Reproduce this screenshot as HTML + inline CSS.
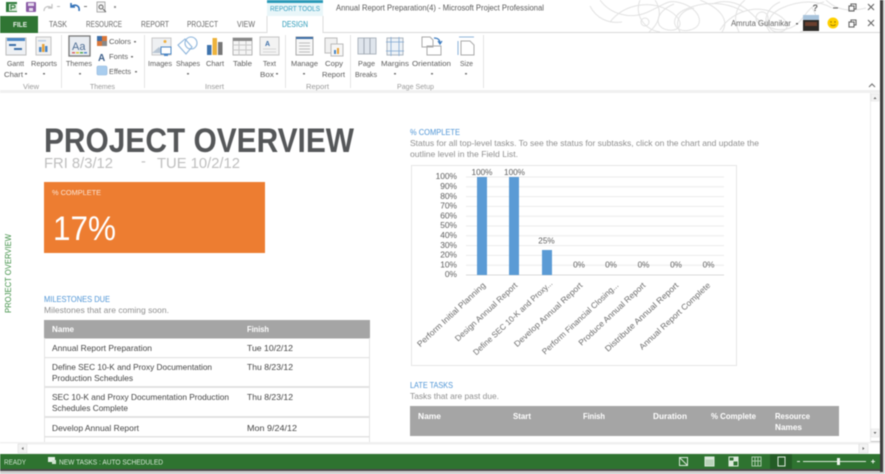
<!DOCTYPE html>
<html lang="en"><head><meta charset="utf-8"><title>Annual Report Preparation - Microsoft Project Professional</title>
<style>
html,body{margin:0;padding:0;background:#fff;width:885px;height:474px;overflow:hidden}
svg{display:block;filter:blur(.6px)}
text{font-family:"Liberation Sans",sans-serif}
.r text{font-size:7.6px;fill:#5c5c5c}
.b{font-size:8.3px;fill:#4f95d6}
.g{font-size:8.3px;fill:#8f8f8f}
.t{font-size:8.3px;fill:#444}
.h{font-size:8.3px;fill:#fff;font-weight:bold}
.y{font-size:8.4px;fill:#5c5c5c;text-anchor:end}
.d{font-size:8.2px;fill:#5c5c5c;text-anchor:middle}
.c{font-size:8.2px;fill:#6c6c6c;text-anchor:end}
</style></head><body>
<svg width="885" height="474" viewBox="0 0 885 474" xmlns="http://www.w3.org/2000/svg">
<rect width="885" height="474" fill="#fff"/>

<!-- swirl decoration -->
<g fill="none" stroke="#e2e2e2" stroke-width="1">
<path d="M600 0c10 14 30 20 48 12s20-14 36-8 22 22 6 26-22-12-6-20 40-10 60 2"/>
<path d="M610 22c14-18 40-22 58-12s14 22 0 20-14-18 6-26"/>
<path d="M640 0c-6 14 4 30 20 32M700 0c20 8 30 20 22 32M720 30c10-16 32-26 52-18s18 20 6 20-14-16 4-24 36-8 50 0"/>
<path d="M712 4c16-6 30 0 40 10s22 20 38 14 14-22 34-26M770 32c-8-10-4-24 10-30M800 32c14-4 20-14 12-24M826 0c10 10 24 12 40 8"/>
<path d="M590 6c6 12 18 18 32 16M655 0c8 12 4 24-6 32M680 32c-6-10 0-22 14-24M745 0c-10 8-12 20-6 32"/>
<circle cx="645" cy="22" r="4"/><circle cx="762" cy="18" r="6"/>
</g>

<!-- quick access -->
<rect x="6" y="2" width="11" height="10" fill="#2f7b3b"/><rect x="9" y="4" width="8" height="7" fill="#d8ead8"/><path d="M11 10V5h2.500a1.500 1.500 0 010 3H11" fill="none" stroke="#2f7b3b" stroke-width="1.100"/>
<rect x="26" y="2" width="10" height="10" rx="1" fill="#8a5aa5"/><rect x="28" y="3" width="6" height="3" fill="#e6dbee"/><rect x="29" y="8" width="4" height="3" fill="#e6dbee"/>
<path d="M44 11c0-4 4-6 8-3M52 4v4h-4" fill="none" stroke="#c2c2c2" stroke-width="1.200"/>
<path d="M79 11c1-5-3-7-7-5M71 3v4h4" fill="none" stroke="#2f6fb7" stroke-width="1.600"/>
<rect x="97" y="2" width="8" height="10" fill="#f4f4f4" stroke="#999" stroke-width=".8"/><circle cx="101" cy="7" r="2" fill="none" stroke="#666"/><path d="M103 9l3 3" stroke="#666"/>
<rect x="114" y="6" width="2" height="2" fill="#999"/><rect x="57" y="6" width="3" height="1" fill="#bbb"/><rect x="84" y="6" width="3" height="1" fill="#777"/>

<!-- title bar -->
<rect x="267" y="0" width="56" height="3" fill="#2b9ab8"/>
<rect x="267" y="3" width="56" height="13" fill="#e9f6f9"/>
<text x="270" y="11" font-size="7.4" fill="#3a9fc0" textLength="50" lengthAdjust="spacingAndGlyphs">REPORT TOOLS</text>
<text x="336" y="10.500" font-size="8" fill="#595959" textLength="208" lengthAdjust="spacingAndGlyphs">Annual Report Preparation(4) - Microsoft Project Professional</text>

<!-- window controls -->
<g fill="none" stroke="#666" stroke-width="1.1">
<path d="M833 8h5"/><rect x="849" y="6" width="5" height="5"/><path d="M851 6V4h5v5h-2"/><path d="M868 4l6 6M874 4l-6 6"/>
<rect x="849" y="22" width="5" height="5"/><path d="M851 22v-2h5v5h-2"/><path d="M868 20l6 6M874 20l-6 6"/>
</g>
<text x="812.500" y="11" font-size="9" font-weight="bold" fill="#666">?</text>
<text x="731" y="26" font-size="8" fill="#666" textLength="60" lengthAdjust="spacingAndGlyphs">Amruta Gulanikar</text>
<rect x="796" y="23" width="2" height="1.500" fill="#666"/>
<rect x="803" y="15" width="16" height="6" fill="#a9c4dc"/><rect x="803" y="20" width="16" height="11" fill="#2d2a27"/><rect x="805" y="22" width="12" height="4" fill="#6b3f2e"/>
<circle cx="833" cy="23" r="5.500" fill="#ffd000"/><circle cx="831" cy="22" r=".7" fill="#8a6a00"/><circle cx="835" cy="22" r=".7" fill="#8a6a00"/><path d="M830.500 24.500c1 1.500 4 1.500 5 0" fill="none" stroke="#8a6a00" stroke-width=".7"/>

<!-- tabs -->
<rect x="0" y="32" width="880" height="1" fill="#d9d9d9"/>
<rect x="0" y="16" width="38" height="17" fill="#2f7533"/>
<text x="13" y="27" font-size="7.6" font-weight="bold" fill="#e6f0e6" textLength="14" lengthAdjust="spacingAndGlyphs">FILE</text>
<g font-size="7.8" fill="#666">
<text x="49" y="27" textLength="18" lengthAdjust="spacingAndGlyphs">TASK</text>
<text x="86" y="27" textLength="36" lengthAdjust="spacingAndGlyphs">RESOURCE</text>
<text x="141" y="27" textLength="28" lengthAdjust="spacingAndGlyphs">REPORT</text>
<text x="187" y="27" textLength="31" lengthAdjust="spacingAndGlyphs">PROJECT</text>
<text x="237" y="27" textLength="18" lengthAdjust="spacingAndGlyphs">VIEW</text>
</g>
<rect x="267" y="16" width="56" height="18" fill="#fff"/>
<path d="M267 33V16M323 16V33" stroke="#dcdcdc"/>
<text x="282" y="27" font-size="7.8" fill="#2b9ab8" textLength="26" lengthAdjust="spacingAndGlyphs">DESIGN</text>

<!-- ribbon -->
<rect x="0" y="90" width="880" height="3" fill="#f0f0f0"/>
<g fill="#e4e4e4"><rect x="61" y="35" width="1" height="53"/><rect x="144" y="35" width="1" height="53"/><rect x="285" y="35" width="1" height="53"/><rect x="350" y="35" width="1" height="53"/><rect x="483" y="35" width="1" height="53"/></g>

<!-- ribbon icons -->
<rect x="6" y="38" width="20" height="17" fill="#eef1f4" stroke="#bbb"/><rect x="7" y="38" width="18" height="3" fill="#4a86c5"/><rect x="9" y="44" width="7" height="2" fill="#3d6fa8"/><rect x="14" y="48" width="8" height="2" fill="#3d6fa8"/>
<rect x="36" y="37" width="15" height="18" fill="#f1f1f1" stroke="#c4c4c4"/><rect x="39" y="47" width="2.500" height="5" fill="#4a86c5"/><rect x="42" y="44" width="2.500" height="8" fill="#e8a33a"/><rect x="45" y="46" width="2.500" height="6" fill="#4a86c5"/><rect x="38" y="40" width="8" height="1.500" fill="#bcd0e6"/>

<rect x="69" y="36" width="21" height="20" fill="#e9edf2" stroke="#777" stroke-width="1.300"/><text x="72" y="50" font-size="11" fill="#4f6f95">Aa</text><rect x="72" y="52" width="3" height="1.500" fill="#d66"/><rect x="76" y="52" width="3" height="1.500" fill="#dc3"/><rect x="80" y="52" width="3" height="1.500" fill="#5a5"/><rect x="84" y="52" width="3" height="1.500" fill="#58c"/>
<rect x="97" y="36" width="5" height="5" fill="#3d6fa8"/><rect x="102" y="36" width="5" height="5" fill="#d9773a"/><rect x="97" y="41" width="5" height="5" fill="#d9773a"/><rect x="102" y="41" width="5" height="5" fill="#888"/>
<text x="98" y="61" font-size="10" font-weight="bold" fill="#3d5f8a">A</text>
<rect x="97" y="66" width="10" height="9" rx="1.500" fill="#a9cdee" stroke="#8cb3d9" stroke-width=".6"/>

<rect x="152" y="38" width="19" height="17" fill="#eef0f2" stroke="#c9c9c9"/><path d="M152 53l7-6 6 6z" fill="#b9c6d4"/><circle cx="165" cy="41.500" r="1.500" fill="#f0b040"/><rect x="161" y="47" width="10" height="7" fill="#fff" stroke="#4a86c5"/><rect x="164" y="54" width="4" height="2" fill="#4a86c5"/>
<g fill="none" stroke="#8fb6dc" stroke-width="1.100"><circle cx="191" cy="43" r="6"/><path d="M178 45l7-6 7 8-6 7z"/></g>
<rect x="207" y="45" width="4.500" height="10" fill="#3f74ad"/><rect x="212.500" y="38" width="4.500" height="17" fill="#edb33c"/><rect x="218" y="42" width="4.500" height="13" fill="#777"/>
<rect x="233" y="38" width="19" height="17" fill="#f5f5f5" stroke="#b5b5b5"/><rect x="233" y="38" width="19" height="3" fill="#888"/><path d="M233 45h19M233 50h19M239 41v14M246 41v14" stroke="#c8c8c8"/>
<rect x="260" y="37" width="19" height="18" fill="#f3f3f3" stroke="#c4c4c4"/><text x="265" y="46" font-size="7" fill="#3d6fa8" font-weight="bold">A</text><path d="M263 49h13M263 52h13" stroke="#d6d6d6"/>
<rect x="296" y="37" width="17" height="18" fill="#f7f7f7" stroke="#aaa"/><rect x="296" y="37" width="17" height="2" fill="#3d6fa8"/><path d="M299 43h11M299 46h11M299 49h11M299 52h11" stroke="#bbb"/>
<rect x="325" y="38" width="12" height="15" fill="#f1f1f1" stroke="#bbb"/><rect x="331" y="44" width="12" height="12" fill="#f6f6f6" stroke="#bbb"/><rect x="334" y="50" width="2" height="4" fill="#4a86c5"/><rect x="337" y="48" width="2" height="6" fill="#e8a33a"/>
<rect x="358" y="38" width="18" height="16" fill="#dfe5ec" stroke="#aeb6bf"/><path d="M364 38v16M370 38v16" stroke="#9fa8b2"/>
<rect x="387" y="38" width="16" height="17" fill="#edf2f7" stroke="#aeb6bf"/><path d="M391 37v19M399 37v19M386 42h18M386 51h18" stroke="#7fa8d2" stroke-width=".8"/>
<path d="M422 37h8l3 3v7h-11zM427 46h14v9h-14z" fill="#fff" stroke="#aaa"/><path d="M434 38c4 0 6 2 6 5M438 41l2 3 2-3" fill="none" stroke="#3d7cc0" stroke-width="1.200"/>
<path d="M461 41h9l4 4v10h-13z" fill="#fff" stroke="#aaa"/><path d="M458 41v14M459 37h15" stroke="#6fa0d0" stroke-width=".8"/>

<g class="r">
<text x="7" y="66" textLength="17" lengthAdjust="spacingAndGlyphs">Gantt</text>
<text x="4" y="77" textLength="19" lengthAdjust="spacingAndGlyphs">Chart</text>
<text x="31" y="66" textLength="26" lengthAdjust="spacingAndGlyphs">Reports</text>
<text x="66" y="66" textLength="26" lengthAdjust="spacingAndGlyphs">Themes</text>
<text x="109" y="44" textLength="22" lengthAdjust="spacingAndGlyphs">Colors</text>
<text x="109" y="59" textLength="19" lengthAdjust="spacingAndGlyphs">Fonts</text>
<text x="109" y="74" textLength="22" lengthAdjust="spacingAndGlyphs">Effects</text>
<text x="148" y="66" textLength="24" lengthAdjust="spacingAndGlyphs">Images</text>
<text x="176" y="66" textLength="24" lengthAdjust="spacingAndGlyphs">Shapes</text>
<text x="206" y="66" textLength="18" lengthAdjust="spacingAndGlyphs">Chart</text>
<text x="233" y="66" textLength="19" lengthAdjust="spacingAndGlyphs">Table</text>
<text x="263" y="66" textLength="13" lengthAdjust="spacingAndGlyphs">Text</text>
<text x="260" y="77" textLength="14" lengthAdjust="spacingAndGlyphs">Box</text>
<text x="291" y="66" textLength="27" lengthAdjust="spacingAndGlyphs">Manage</text>
<text x="325" y="66" textLength="18" lengthAdjust="spacingAndGlyphs">Copy</text>
<text x="322" y="77" textLength="23" lengthAdjust="spacingAndGlyphs">Report</text>
<text x="358" y="66" textLength="17" lengthAdjust="spacingAndGlyphs">Page</text>
<text x="355" y="77" textLength="22" lengthAdjust="spacingAndGlyphs">Breaks</text>
<text x="381" y="66" textLength="28" lengthAdjust="spacingAndGlyphs">Margins</text>
<text x="412" y="66" textLength="39" lengthAdjust="spacingAndGlyphs">Orientation</text>
<text x="460" y="66" textLength="13" lengthAdjust="spacingAndGlyphs">Size</text>
</g>
<g font-size="7.2" fill="#999">
<text x="23" y="89" textLength="16" lengthAdjust="spacingAndGlyphs">View</text>
<text x="90" y="89" textLength="25" lengthAdjust="spacingAndGlyphs">Themes</text>
<text x="205" y="89" textLength="19" lengthAdjust="spacingAndGlyphs">Insert</text>
<text x="306" y="89" textLength="23" lengthAdjust="spacingAndGlyphs">Report</text>
<text x="397" y="89" textLength="37" lengthAdjust="spacingAndGlyphs">Page Setup</text>
</g>
<g fill="#777">
<rect x="25" y="73" width="2" height="1.500"/><rect x="43" y="73" width="2" height="1.500"/><rect x="79" y="73" width="2" height="1.500"/>
<rect x="134" y="41" width="2" height="1.500"/><rect x="131" y="56" width="2" height="1.500"/><rect x="135" y="71" width="2" height="1.500"/>
<rect x="187" y="73" width="2" height="1.500"/><rect x="276" y="73" width="2" height="1.500"/><rect x="303" y="73" width="2" height="1.500"/>
<rect x="394" y="73" width="2" height="1.500"/><rect x="431" y="73" width="2" height="1.500"/><rect x="465" y="73" width="2" height="1.500"/>
</g>
<path d="M869 87l3-3 3 3" fill="none" stroke="#777" stroke-width="1.200"/>

<!-- left label -->
<text transform="translate(11,313) rotate(-90)" font-size="8" fill="#3f8f45" textLength="79" lengthAdjust="spacingAndGlyphs">PROJECT OVERVIEW</text>

<!-- heading -->
<text x="44" y="152" font-size="34" font-weight="bold" fill="#555759" textLength="310" lengthAdjust="spacingAndGlyphs">PROJECT OVERVIEW</text>
<g font-size="14.500" fill="#bfbfbf">
<text x="44" y="168" textLength="69" lengthAdjust="spacingAndGlyphs">FRI 8/3/12</text>
<text x="141" y="166">-</text>
<text x="157" y="168" textLength="83" lengthAdjust="spacingAndGlyphs">TUE 10/2/12</text>
</g>
<rect x="44" y="182" width="221" height="71" fill="#ed7d31"/>
<text x="52" y="195" font-size="7.600" fill="#fbe3d2" textLength="49" lengthAdjust="spacingAndGlyphs">% COMPLETE</text>
<text x="53" y="240" font-size="34" fill="#fff" textLength="63" lengthAdjust="spacingAndGlyphs">17%</text>

<!-- milestones -->
<text class="b" x="44" y="302" textLength="66" lengthAdjust="spacingAndGlyphs">MILESTONES DUE</text>
<text class="g" x="44" y="313" textLength="125" lengthAdjust="spacingAndGlyphs">Milestones that are coming soon.</text>
<rect x="44" y="320" width="326" height="18.500" fill="#a5a5a5"/>
<text class="h" x="52" y="332" textLength="22" lengthAdjust="spacingAndGlyphs">Name</text>
<text class="h" x="247" y="332" textLength="22" lengthAdjust="spacingAndGlyphs">Finish</text>
<g fill="#e3e3e3"><rect x="44" y="338" width="1" height="105"/><rect x="369" y="338" width="1" height="105"/><rect x="44" y="357" width="326" height="1.200"/><rect x="44" y="386" width="326" height="2"/><rect x="44" y="416" width="326" height="2"/><rect x="44" y="436" width="326" height="1.500"/></g>
<text class="t" x="52" y="351" textLength="100" lengthAdjust="spacingAndGlyphs">Annual Report Preparation</text>
<text class="t" x="247" y="351" textLength="46" lengthAdjust="spacingAndGlyphs">Tue 10/2/12</text>
<text class="t" x="52" y="370" textLength="160" lengthAdjust="spacingAndGlyphs">Define SEC 10-K and Proxy Documentation</text>
<text class="t" x="52" y="381" textLength="81" lengthAdjust="spacingAndGlyphs">Production Schedules</text>
<text class="t" x="247" y="370" textLength="46" lengthAdjust="spacingAndGlyphs">Thu 8/23/12</text>
<text class="t" x="52" y="400" textLength="177" lengthAdjust="spacingAndGlyphs">SEC 10-K and Proxy Documentation Production</text>
<text class="t" x="52" y="411" textLength="76" lengthAdjust="spacingAndGlyphs">Schedules Complete</text>
<text class="t" x="247" y="400" textLength="46" lengthAdjust="spacingAndGlyphs">Thu 8/23/12</text>
<text class="t" x="52" y="431" textLength="87" lengthAdjust="spacingAndGlyphs">Develop Annual Report</text>
<text class="t" x="247" y="431" textLength="50" lengthAdjust="spacingAndGlyphs">Mon 9/24/12</text>
<text class="t" x="52" y="448" textLength="82" lengthAdjust="spacingAndGlyphs">Perform Financial Closing</text>
<text class="t" x="247" y="448" textLength="46" lengthAdjust="spacingAndGlyphs">Fri 9/28/12</text>

<!-- % complete chart -->
<text class="b" x="410" y="135" textLength="50" lengthAdjust="spacingAndGlyphs">% COMPLETE</text>
<text class="g" x="410" y="146" textLength="349" lengthAdjust="spacingAndGlyphs">Status for all top-level tasks. To see the status for subtasks, click on the chart and update the</text>
<text class="g" x="410" y="157" textLength="108" lengthAdjust="spacingAndGlyphs">outline level in the Field List.</text>
<rect x="411.500" y="165.500" width="325" height="200" fill="#fff" stroke="#e6e6e6"/>
<g stroke="#ececec"><path d="M466 177h258M466 186.800h258M466 196.600h258M466 206.400h258M466 216.200h258M466 226h258M466 235.800h258M466 245.600h258M466 255.400h258M466 265.200h258"/><path d="M466 275h258" stroke="#d9d9d9"/></g>
<g class="y">
<text class="y" x="457" y="179">100%</text><text class="y" x="457" y="189">90%</text><text class="y" x="457" y="199">80%</text><text class="y" x="457" y="208.500">70%</text><text class="y" x="457" y="218.500">60%</text><text class="y" x="457" y="228">50%</text><text class="y" x="457" y="238">40%</text><text class="y" x="457" y="248">30%</text><text class="y" x="457" y="257.500">20%</text><text class="y" x="457" y="267.500">10%</text><text class="y" x="457" y="277">0%</text>
</g>
<g fill="#5b9bd5"><rect x="477" y="177" width="10" height="98"/><rect x="509" y="177" width="10" height="98"/><rect x="542" y="250" width="10" height="25"/></g>
<text class="d" x="482" y="175">100%</text><text class="d" x="514.500" y="175">100%</text><text class="d" x="546.500" y="243.500">25%</text>
<text class="d" x="579" y="267.500">0%</text><text class="d" x="611" y="267.500">0%</text><text class="d" x="643.500" y="267.500">0%</text><text class="d" x="676" y="267.500">0%</text><text class="d" x="708.500" y="267.500">0%</text>
<text class="c" transform="translate(486,286) rotate(-43)" textLength="90" lengthAdjust="spacingAndGlyphs">Perform Initial Planning</text>
<text class="c" transform="translate(518,286) rotate(-43)" textLength="82" lengthAdjust="spacingAndGlyphs">Design Annual Report</text>
<text class="c" transform="translate(553,284) rotate(-43)" textLength="105" lengthAdjust="spacingAndGlyphs">Define SEC 10-K and Proxy...</text>
<text class="c" transform="translate(583,286) rotate(-43)" textLength="90" lengthAdjust="spacingAndGlyphs">Develop Annual Report</text>
<text class="c" transform="translate(619,286) rotate(-43)" textLength="101" lengthAdjust="spacingAndGlyphs">Perform Financial Closing...</text>
<text class="c" transform="translate(646,286) rotate(-43)" textLength="88" lengthAdjust="spacingAndGlyphs">Produce Annual Report</text>
<text class="c" transform="translate(679,286) rotate(-43)" textLength="97" lengthAdjust="spacingAndGlyphs">Distribute Annual Report</text>
<text class="c" transform="translate(711,286) rotate(-43)" textLength="94" lengthAdjust="spacingAndGlyphs">Annual Report Complete</text>

<!-- late tasks -->
<text class="b" x="410" y="388" textLength="43" lengthAdjust="spacingAndGlyphs">LATE TASKS</text>
<text class="g" x="410" y="399" textLength="89" lengthAdjust="spacingAndGlyphs">Tasks that are past due.</text>
<rect x="410" y="406" width="429" height="30" fill="#a5a5a5"/>
<text class="h" x="418" y="419" textLength="23" lengthAdjust="spacingAndGlyphs">Name</text>
<text class="h" x="513" y="419" textLength="18" lengthAdjust="spacingAndGlyphs">Start</text>
<text class="h" x="583" y="419" textLength="22" lengthAdjust="spacingAndGlyphs">Finish</text>
<text class="h" x="653" y="419" textLength="34" lengthAdjust="spacingAndGlyphs">Duration</text>
<text class="h" x="711" y="419" textLength="45" lengthAdjust="spacingAndGlyphs">% Complete</text>
<text class="h" x="775" y="419" textLength="35" lengthAdjust="spacingAndGlyphs">Resource</text>
<text class="h" x="775" y="430" textLength="27" lengthAdjust="spacingAndGlyphs">Names</text>

<!-- vertical scrollbar -->
<rect x="870" y="93" width="10" height="350" fill="#fff"/>
<rect x="870" y="93" width="1" height="350" fill="#ededed"/>
<rect x="871" y="94" width="8" height="7" fill="#f3f3f3" stroke="#ddd" stroke-width=".5"/><path d="M873.500 99l1.500-2 1.500 2z" fill="#666"/>
<rect x="871" y="429" width="8" height="8" fill="#f3f3f3" stroke="#ddd" stroke-width=".5"/><path d="M873.500 432l1.500 2 1.500-2z" fill="#666"/>
<rect x="871" y="441" width="9" height="2" fill="#c9c9c9"/>

<!-- horizontal scrollbar -->
<rect x="0" y="442" width="880" height="12" fill="#fff"/>
<rect x="0" y="442" width="880" height="1.500" fill="#f0f0f0"/>
<rect x="18" y="444" width="9" height="9" fill="#f3f3f3" stroke="#ddd" stroke-width=".6"/><path d="M23.500 447l-2 1.500 2 1.500z" fill="#666"/>
<rect x="27" y="444" width="832" height="9.500" fill="#fff" stroke="#e5e5e5" stroke-width=".6"/>
<rect x="859" y="444" width="9" height="9" fill="#f3f3f3" stroke="#ddd" stroke-width=".6"/><path d="M862.500 447l2 1.500-2 1.500z" fill="#666"/>

<!-- status bar -->
<rect x="0" y="454" width="881" height="15" fill="#2e7330"/>
<rect x="770" y="454" width="22" height="15" fill="#245c26"/>
<text x="4" y="464.500" font-size="7.200" fill="#cfe3cf" textLength="22" lengthAdjust="spacingAndGlyphs">READY</text>
<rect x="48" y="457" width="7" height="5" fill="#e6f0e6"/><rect x="52" y="460" width="4" height="4" fill="#cfe3cf"/>
<text x="59" y="464.500" font-size="7.200" fill="#d8e9d8" textLength="104" lengthAdjust="spacingAndGlyphs">NEW TASKS : AUTO SCHEDULED</text>
<g fill="none" stroke="#dbe9db" stroke-width="1">
<rect x="679.500" y="457.500" width="8" height="8"/><path d="M680 458l7 7"/>
<rect x="705" y="457" width="9" height="9" fill="#b9d3b9"/><rect x="705" y="457" width="9" height="2" fill="#dbe9db"/>
<rect x="729" y="457" width="9" height="9"/><rect x="729" y="461" width="4" height="5" fill="#dbe9db"/><rect x="734" y="457" width="4" height="4" fill="#dbe9db"/>
<rect x="752" y="457" width="9" height="9" stroke="#a9c9a9"/><path d="M755 457v9M758 457v9M752 461h9" stroke="#a9c9a9"/>
<rect x="778" y="457" width="7" height="9"/>
</g>
<rect x="797" y="461" width="3" height="1" fill="#e6f0e6"/><rect x="803" y="461" width="63" height="1" fill="#dbe9db"/><rect x="837" y="458" width="3" height="7" fill="#eef5ee"/><path d="M871 461.500h4M873 459.500v4" stroke="#e6f0e6"/>

<!-- shadows -->
<rect x="0" y="469" width="885" height="2" fill="#4a4a4a"/>
<rect x="0" y="471" width="885" height="3" fill="#cfcfcf"/>
<rect x="880" y="0" width="3" height="472" fill="#3d3d3d"/>
<rect x="883" y="0" width="2" height="474" fill="#d5d5d5"/>
</svg>
</body></html>
